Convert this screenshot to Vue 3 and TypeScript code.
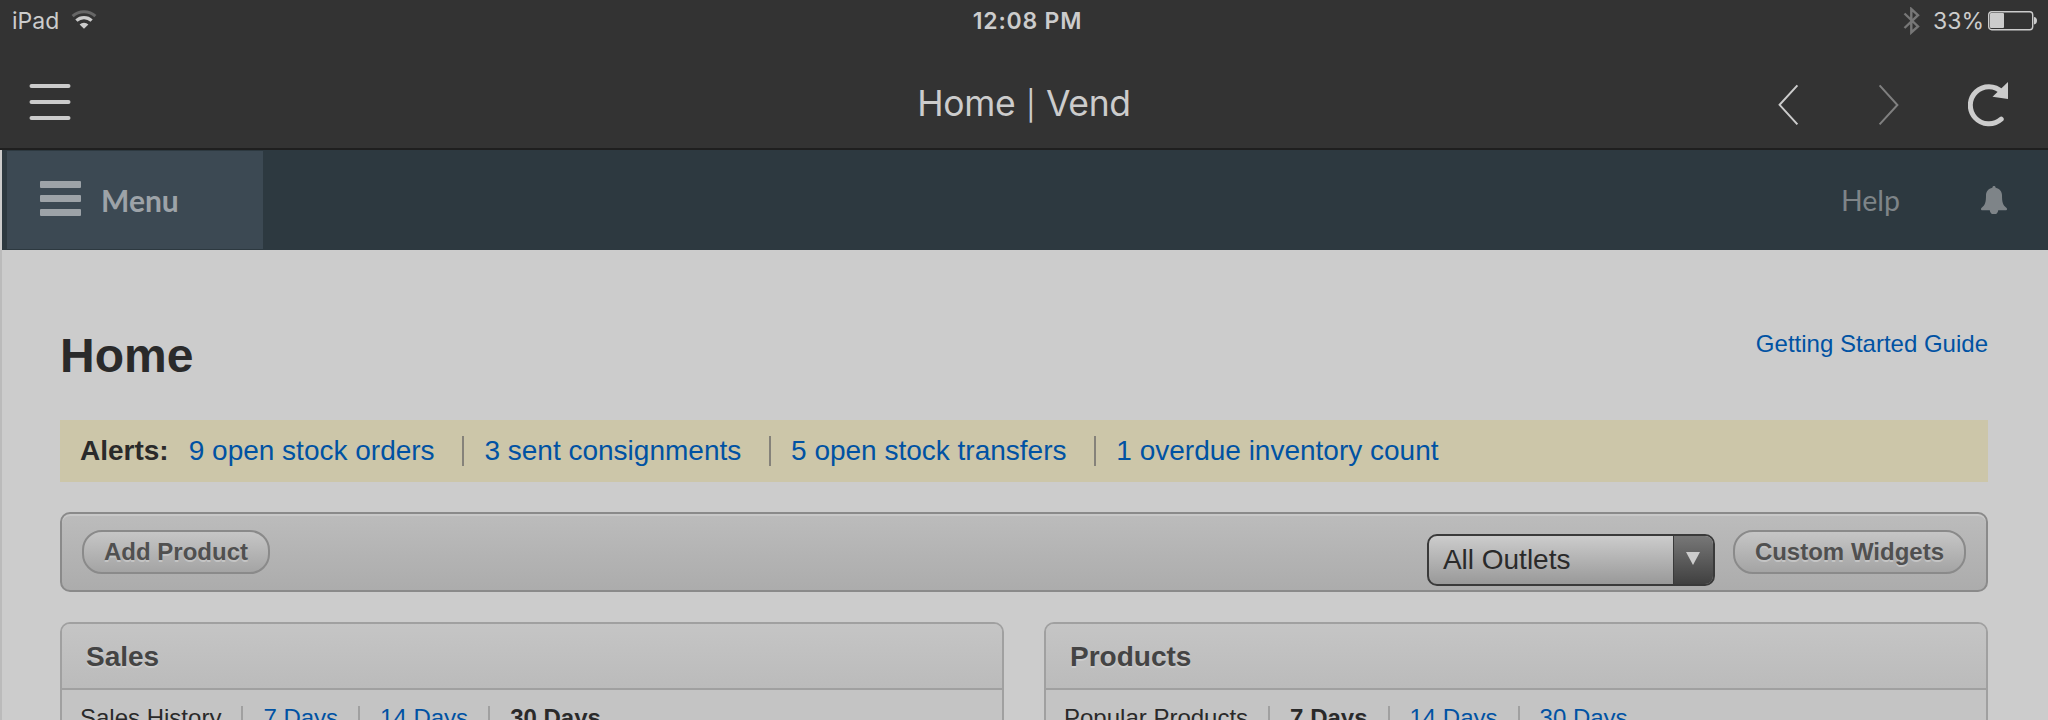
<script setup lang="ts">
interface Tab {
  label: string
  active?: boolean
}
interface Widget {
  title: string
  subtitle: string
  ranges: Tab[]
}

const alerts: string[] = [
  '9 open stock orders',
  '3 sent consignments',
  '5 open stock transfers',
  '1 overdue inventory count',
]

const widgets: Widget[] = [
  {
    title: 'Sales',
    subtitle: 'Sales History',
    ranges: [{ label: '7 Days' }, { label: '14 Days' }, { label: '30 Days', active: true }],
  },
  {
    title: 'Products',
    subtitle: 'Popular Products',
    ranges: [{ label: '7 Days', active: true }, { label: '14 Days' }, { label: '30 Days' }],
  },
]
</script>

<template>
  <div class="screen">
    <header class="chrome">
      <div class="status">
        <div class="status-left">
          <span class="device">iPad</span>
          <svg class="wifi" width="26" height="20" viewBox="0 0 26 20">
            <path d="M1.6 6.2a16.6 16.6 0 0 1 22.8 0" fill="none" stroke="#666" stroke-width="3" />
            <path d="M5.4 10.6a11 11 0 0 1 15.2 0" fill="none" stroke="#ccc" stroke-width="3.2" />
            <path d="M13 18.8L8.6 14.4a6.4 6.4 0 0 1 8.8 0z" fill="#ccc" />
          </svg>
        </div>
        <div class="time">12:08 PM</div>
        <div class="status-right">
          <svg class="bluetooth" width="18" height="28" viewBox="0 0 18 28">
            <path d="M1.5 6.5L15 19.5L8.3 25.5V2L15 8.2L1.5 21" fill="none" stroke="#777" stroke-width="2.4" />
          </svg>
          <span class="percent">33%</span>
          <svg class="battery" width="50" height="20" viewBox="0 0 50 20">
            <rect x="0.7" y="0.7" width="44" height="18" rx="3" fill="none" stroke="#ccc" stroke-width="1.4" />
            <rect x="2" y="2" width="14" height="15" rx="1" fill="#ccc" />
            <path d="M46 6c4 0 4 7.4 0 7.4z" fill="#ccc" />
          </svg>
        </div>
      </div>
      <div class="bar">
        <div class="bar-side">
          <svg width="42" height="36" viewBox="0 0 42 36">
            <path d="M2.500 2H39.500M2.500 18H39.500M2.500 34H39.500" stroke="#ccc" stroke-width="4" stroke-linecap="round" />
          </svg>
        </div>
        <div class="bar-title">Home <span class="pipe">|</span> Vend</div>
        <div class="bar-side bar-actions">
          <svg width="21" height="42" viewBox="0 0 21 42">
            <path d="M19.4 1.4L1.6 20.8L19.4 40.4" fill="none" stroke="#ccc" stroke-width="2" />
          </svg>
          <svg width="21" height="42" viewBox="0 0 21 42">
            <path d="M1.6 1.4L19.4 21L1.6 40.4" fill="none" stroke="#808080" stroke-width="2" />
          </svg>
          <svg width="42" height="46" viewBox="0 0 42 46">
            <path d="M33.2 37.2A18.6 18.6 0 1 1 34 10" fill="none" stroke="#ccc" stroke-width="5" stroke-linecap="round" />
            <path d="M40 0V17L24.5 14.8z" fill="#ccc" />
          </svg>
        </div>
      </div>
    </header>

    <nav class="nav">
      <button class="menu" type="button">
        <svg width="41" height="35" viewBox="0 0 41 35">
          <g fill="#9da3a8">
            <rect width="41" height="7" rx="1" />
            <rect y="14" width="41" height="7" rx="1" />
            <rect y="28" width="41" height="7" rx="1" />
          </g>
        </svg>
        <span class="menu-label">Menu</span>
      </button>
      <div class="nav-right">
        <span class="help">Help</span>
        <svg width="26" height="28" viewBox="0 0 26 28">
          <path
            d="M13 0c1 0 1.6.7 1.6 1.7C18.700 2.500 21 5.500 21 9.300c0 6.700.7 9.700 4.600 12.700.8.900.4 2.200-.9 2.200H17.200a4.200 4.200 0 0 1-8.400 0H1.300C0 24.200-.4 22.900.4 22 4.300 19 5 16 5 9.300 5 5.500 7.300 2.500 11.400 1.700 11.400.7 12 0 13 0z"
            fill="#7e8488"
          />
        </svg>
      </div>
    </nav>

    <main class="content">
      <div class="heading">
        <h1>Home</h1>
        <a class="guide">Getting Started Guide</a>
      </div>

      <div class="alerts">
        <strong>Alerts:</strong>
        <a v-for="alert in alerts" :key="alert" class="alert">{{ alert }}</a>
      </div>

      <div class="tools">
        <button class="pill" type="button">Add Product</button>
        <div class="tools-right">
          <div class="select">
            <span class="select-value">All Outlets</span>
            <span class="select-arrow">
              <svg width="14" height="13" viewBox="0 0 14 13"><path d="M0 0H14L7 13z" fill="#ccc" /></svg>
            </span>
          </div>
          <button class="pill" type="button">Custom Widgets</button>
        </div>
      </div>

      <div class="widgets">
        <section v-for="w in widgets" :key="w.title" class="widget">
          <h2>{{ w.title }}</h2>
          <div class="ranges">
            <span class="range label">{{ w.subtitle }}</span>
            <a v-for="r in w.ranges" :key="r.label" class="range" :class="{ active: r.active }">{{ r.label }}</a>
          </div>
        </section>
      </div>
    </main>
  </div>
</template>

<style>
body {
  margin: 0;
  overflow: hidden;
}
</style>

<style scoped>
.screen {
  width: 2048px;
  height: 720px;
  overflow: hidden;
  background: #ccc;
  font-family: 'Liberation Sans', Arial, sans-serif;
  color: #2a2a2a;
  display: flex;
  flex-direction: column;
}
button {
  font: inherit;
  margin: 0;
  box-sizing: border-box;
}
svg {
  display: block;
  flex: none;
}
.chrome {
  box-sizing: border-box;
  height: 150px;
  flex: none;
  background: #333;
  border-bottom: 2px solid #1f1f1f;
  font-family: Inter, Roboto, sans-serif;
  color: #ccc;
}
.status {
  height: 42px;
  display: grid;
  grid-template-columns: 1fr auto 1fr;
  align-items: center;
  font-size: 23px;
  line-height: 42px;
}
.status-left,
.status-right {
  display: flex;
  align-items: center;
}
.status-left {
  padding-left: 12px;
  gap: 12px;
}
.wifi {
  margin-top: -2px;
}
.time {
  font-weight: 600;
  letter-spacing: 0.8px;
  padding-left: 7px;
}
.status-right {
  justify-content: flex-end;
  padding-right: 10px;
}
.bluetooth {
  margin-right: 12px;
}
.percent {
  margin-right: 4px;
}
.battery {
  margin-top: -1px;
}
.bar {
  height: 106px;
  box-sizing: border-box;
  padding-top: 16px;
  display: grid;
  grid-template-columns: 1fr auto 1fr;
  align-items: center;
}
.bar-side {
  display: flex;
  align-items: center;
  height: 84px;
  box-sizing: border-box;
  padding: 0 38px 2px 29px;
}
.bar-title {
  font-size: 35.5px;
  font-weight: 400;
  letter-spacing: -0.35px;
  line-height: 44px;
  padding-top: 3px;
}
.pipe {
  font-size: 29px;
  padding: 0 1px;
}
.bar-actions {
  justify-content: flex-end;
  gap: 79px;
  padding: 3px 38px 0 0;
}
.bar-actions svg:last-child {
  margin-left: -10px;
}
.nav {
  box-sizing: border-box;
  height: 100px;
  flex: none;
  border-left: 2px solid #ccc;
  background: #2d3940;
  display: flex;
  justify-content: space-between;
  padding: 1px 41px 1px 5px;
  font-family: Lato, sans-serif;
}
.menu {
  width: 256px;
  height: 98px;
  border: 0;
  padding: 0 0 0 33px;
  display: flex;
  align-items: center;
  gap: 20px;
  background: #3c4953;
  color: #9da3a8;
  font-size: 30px;
  font-weight: 700;
}
.menu svg {
  margin-top: -3px;
}
.menu-label {
  margin-top: -1px;
}
.nav-right {
  display: flex;
  align-items: center;
  gap: 81px;
  color: #7e8488;
  font-size: 28.5px;
}
.content {
  flex: 1;
  border-left: 2px solid #bbb;
  padding: 76px 60px 0 58px;
}
.heading {
  display: flex;
  justify-content: space-between;
  height: 94px;
}
h1 {
  margin: 0;
  font-size: 48px;
  line-height: 60px;
}
.guide {
  font-size: 24px;
  line-height: 36px;
}
a,
.guide {
  color: #0052a3;
}
.alerts {
  height: 62px;
  background: #ccc6a9;
  display: flex;
  align-items: center;
  padding-left: 20px;
  font-size: 28px;
}
.alerts strong {
  margin-right: 20px;
}
.alert {
  display: flex;
  align-items: center;
  height: 30px;
}
.alert + .alert {
  border-left: 2px solid #85827a;
  margin-left: 27.8px;
  padding-left: 20px;
}
.tools {
  box-sizing: border-box;
  margin-top: 30px;
  height: 80px;
  border: 2px solid #8a8a8a;
  border-radius: 10px;
  background: linear-gradient(#bcbcbc, #acacac);
  box-shadow: inset 0 2px #c8c8c8;
  display: flex;
  justify-content: space-between;
  align-items: flex-start;
  padding: 16px 20px 0;
}
.pill {
  height: 44px;
  border: 2px solid #8a8a8a;
  border-radius: 20px;
  padding: 0 20px;
  background: linear-gradient(#c6c6c6, #a4a4a4);
  color: #505050;
  font-size: 24px;
  font-weight: 700;
  line-height: 40px;
  text-shadow: 0 2px #c4c4c4;
}
.tools-right {
  display: flex;
  gap: 18px;
}
.select {
  box-sizing: border-box;
  width: 288px;
  height: 52px;
  margin-top: 4px;
  border: 2px solid #3a3a3a;
  border-radius: 10px;
  overflow: hidden;
  display: flex;
  background: linear-gradient(#ccc, #999);
  font-size: 28px;
}
.select-value {
  flex: 1;
  padding-left: 14px;
  line-height: 48px;
}
.select-arrow {
  width: 39px;
  border-left: 1px solid #3a3a3a;
  background: linear-gradient(#777, #404040);
  display: flex;
  justify-content: center;
  padding-top: 16px;
}
.widgets {
  margin-top: 30px;
  display: grid;
  grid-template-columns: 1fr 1fr;
  gap: 40px;
}
.widget {
  border: 2px solid #a0a0a0;
  border-radius: 10px 10px 0 0;
  background: #c4c4c4;
  height: 140px;
  overflow: hidden;
}
h2 {
  margin: 0;
  height: 64px;
  border-bottom: 2px solid #a0a0a0;
  padding-left: 24px;
  font-size: 28px;
  line-height: 66px;
  color: #444;
  text-shadow: 0 2px #ccc;
  background: linear-gradient(#c5c5c5, #bbb);
}
.ranges {
  display: flex;
  padding: 16px 0 0 18px;
  font-size: 24px;
  line-height: 24px;
}
.range + .range {
  border-left: 2px solid #a0a0a0;
  margin-left: 20px;
  padding-left: 20px;
}
.range.active {
  color: #2a2a2a;
  font-weight: 700;
}
</style>
